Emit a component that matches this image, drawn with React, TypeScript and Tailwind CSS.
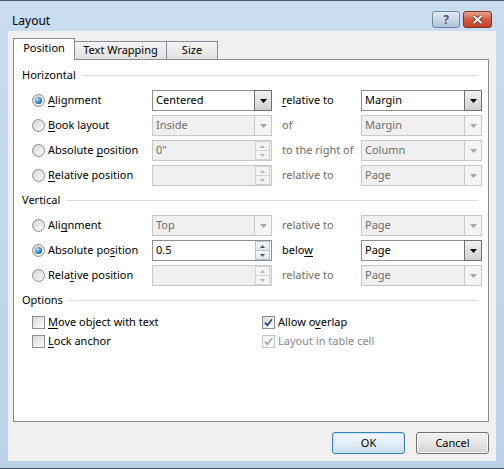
import React from 'react';

const font = "font-['Noto_Sans',sans-serif]";

function Mn({ text, at }: { text: string; at: number }) {
  // underline one letter, like a dialog mnemonic
  return (
    <>
      {text.slice(0, at)}
      <span className="underline underline-offset-[2px]">{text[at]}</span>
      {text.slice(at + 1)}
    </>
  );
}

function Radio({ checked }: { checked?: boolean }) {
  return (
    <span className="flex h-[13px] w-[13px] shrink-0 items-center justify-center rounded-full border border-[#8d8d8d] bg-linear-to-br from-[#d4d4d4] to-[#fcfcfc]">
      {checked && (
        <span className="h-[7px] w-[7px] rounded-full bg-[radial-gradient(circle_at_35%_35%,#b5e2ff,#2a7fd0_55%,#0d3f7c)]" />
      )}
    </span>
  );
}

function Check({ checked, disabled }: { checked?: boolean; disabled?: boolean }) {
  return (
    <span
      className={`flex h-[13px] w-[13px] shrink-0 items-center justify-center border bg-linear-to-br ${
        disabled ? 'border-[#c5c5c5] from-[#f0f0f0] to-[#fafafa]' : 'border-[#8e8f8f] from-[#d8d8d8] to-white'
      }`}
    >
      {checked && (
        <svg width="9" height="9" viewBox="0 0 9 9">
          <path
            d="M1 4.6 L3.4 7.2 L8 1.2"
            fill="none"
            stroke={disabled ? '#a8a8a8' : '#21438c'}
            strokeWidth="1.7"
          />
        </svg>
      )}
    </span>
  );
}

function Arrow({ color }: { color: string }) {
  return (
    <svg width="7" height="4" viewBox="0 0 7 4">
      <path d="M0 0h7L3.5 4z" fill={color} />
    </svg>
  );
}

function Combo({ value, enabled, w = 'w-[120px]' }: { value: string; enabled?: boolean; w?: string }) {
  return (
    <div
      className={`flex h-[21px] ${w} shrink-0 items-center border ${
        enabled ? 'border-[#8f8f8f] bg-white text-black' : 'border-[#c8c8c8] bg-[#f0f0f0] text-[#6d6d6d]'
      }`}
    >
      <span className="flex-1 pl-[3px]">{value}</span>
      <div
        className={`-my-px -mr-px flex h-[21px] w-[18px] items-center justify-center border ${
          enabled
            ? 'border-[#6f6f6f] bg-linear-to-b from-[#f2f2f2] to-[#cfcfcf]'
            : 'border-[#c8c8c8] bg-[#f4f4f4]'
        }`}
      >
        <Arrow color={enabled ? '#000' : '#a6a6a6'} />
      </div>
    </div>
  );
}

function Spin({ value, enabled }: { value: string; enabled?: boolean }) {
  const half = `flex flex-1 items-center justify-center border ${
    enabled ? 'border-[#b8c4d2] bg-linear-to-b from-[#f6f6f6] to-[#e2e6ea]' : 'border-[#d2d2d2] bg-[#f4f4f4]'
  }`;
  const c = enabled ? '#3f5a7a' : '#b4b4b4';
  return (
    <div
      className={`flex h-[21px] w-[120px] shrink-0 items-center border ${
        enabled ? 'border-[#8f8f8f] bg-white text-black' : 'border-[#c8c8c8] bg-[#f0f0f0] text-[#6d6d6d]'
      }`}
    >
      <span className="flex-1 pl-[3px]">{value}</span>
      <div className="mr-px flex h-[19px] w-[15px] flex-col">
        <div className={half}>
          <svg width="5" height="3" viewBox="0 0 5 3">
            <path d="M0 3h5L2.5 0z" fill={c} />
          </svg>
        </div>
        <div className={`-mt-px ${half}`}>
          <svg width="5" height="3" viewBox="0 0 5 3">
            <path d="M0 0h5L2.5 3z" fill={c} />
          </svg>
        </div>
      </div>
    </div>
  );
}

function Group({ title }: { title: string }) {
  return (
    <div className="flex h-[25px] items-center gap-[6px] pl-[8px] pr-[10px]">
      <span>{title}</span>
      <div className="h-px flex-1 bg-[#dcdcdc]" />
    </div>
  );
}

function Row({
  checked,
  label,
  field,
  rel,
  relOn,
  combo,
  comboOn,
}: {
  checked?: boolean;
  label: React.ReactNode;
  field: React.ReactNode;
  rel: React.ReactNode;
  relOn?: boolean;
  combo: string;
  comboOn?: boolean;
}) {
  return (
    <div className="flex h-[25px] items-center">
      <div className="flex w-[138px] items-center gap-[3px] pl-[18px]">
        <Radio checked={checked} />
        <span>{label}</span>
      </div>
      {field}
      <div className={`w-[89px] pl-[10px] ${relOn ? 'text-black' : 'text-[#6d6d6d]'}`}>{rel}</div>
      <Combo value={combo} enabled={comboOn} w="w-[121px]" />
    </div>
  );
}

export default function App() {
  return (
    <div
      className={`${font} flex h-[469px] w-[504px] flex-col border-y border-[#4a5563] bg-linear-to-b from-[#c9dcf0] to-[#bcd2ea] text-[11px] text-black`}
    >
      {/* title bar */}
      <div className="flex h-[30px] justify-between pl-[12px] pr-[12px]">
        <span className="pt-[14px] text-[12px] leading-none">Layout</span>
        <div className="flex items-center gap-[3px] self-start pt-[10px]">
          <div className="flex h-[17px] w-[28px] items-center justify-center rounded-[3px] border border-[#6f86a3] bg-linear-to-b from-[#e4ecf5] to-[#aec2da] text-[12px] font-bold text-[#4a5a6e]">
            ?
          </div>
          <div className="flex h-[17px] w-[29px] items-center justify-center rounded-[3px] border border-[#7c3426] bg-linear-to-b from-[#e9a593] via-[#d35a40] to-[#c2432a]">
            <svg width="11" height="9" viewBox="0 0 11 9">
              <path d="M1.5 1 L9.5 8 M9.5 1 L1.5 8" stroke="#5e2318" strokeWidth="3.4" />
              <path d="M1.5 1 L9.5 8 M9.5 1 L1.5 8" stroke="#fff" strokeWidth="2" />
            </svg>
          </div>
        </div>
      </div>

      {/* client area */}
      <div className="mx-[8px] flex h-[430px] flex-col bg-[#f0f0f0] pl-[5px] pt-[7px]">
        {/* tabs */}
        <div className="relative z-10 -mb-px flex items-end">
          <div className="flex h-[22px] w-[62px] items-center justify-center border border-b-0 border-[#898c95] bg-white pb-[2px]">
            Position
          </div>
          <div className="-ml-px flex h-[19px] w-[93px] items-center justify-center border border-[#898c95] bg-linear-to-b from-[#f4f4f4] to-[#e1e1e1]">
            Text Wrapping
          </div>
          <div className="-ml-px flex h-[19px] w-[52px] items-center justify-center border border-[#898c95] bg-linear-to-b from-[#f4f4f4] to-[#e1e1e1]">
            Size
          </div>
        </div>

        {/* panel */}
        <div className="flex h-[363px] w-[476px] flex-col border border-[#898c95] bg-white pt-[3px]">
          <Group title="Horizontal" />
          <Row
            checked
            label={<Mn text="Alignment" at={0} />}
            field={<Combo value="Centered" enabled />}
            rel={<Mn text="relative to" at={0} />}
            relOn
            combo="Margin"
            comboOn
          />
          <Row label={<Mn text="Book layout" at={0} />} field={<Combo value="Inside" />} rel="of" combo="Margin" />
          <Row
            label={<Mn text="Absolute position" at={9} />}
            field={<Spin value={'0"'} />}
            rel="to the right of"
            combo="Column"
          />
          <Row
            label={<Mn text="Relative position" at={0} />}
            field={<Spin value="" />}
            rel="relative to"
            combo="Page"
          />

          <Group title="Vertical" />
          <Row label={<Mn text="Alignment" at={3} />} field={<Combo value="Top" />} rel="relative to" combo="Page" />
          <Row
            checked
            label={<Mn text="Absolute position" at={11} />}
            field={<Spin value="0.5" enabled />}
            rel={<Mn text="below" at={4} />}
            relOn
            combo="Page"
            comboOn
          />
          <Row
            label={<Mn text="Relative position" at={4} />}
            field={<Spin value="" />}
            rel="relative to"
            combo="Page"
          />

          <Group title="Options" />
          <div className="flex">
            <div className="flex w-[248px] flex-col pl-[18px]">
              <div className="flex h-[19px] items-center gap-[3px]">
                <Check />
                <span>
                  <Mn text="Move object with text" at={0} />
                </span>
              </div>
              <div className="flex h-[19px] items-center gap-[3px]">
                <Check />
                <span>
                  <Mn text="Lock anchor" at={0} />
                </span>
              </div>
            </div>
            <div className="flex flex-col">
              <div className="flex h-[19px] items-center gap-[3px]">
                <Check checked />
                <span>
                  <Mn text="Allow overlap" at={7} />
                </span>
              </div>
              <div className="flex h-[19px] items-center gap-[3px] text-[#8a8a8a]">
                <Check checked disabled />
                <span>Layout in table cell</span>
              </div>
            </div>
          </div>
        </div>

        {/* buttons */}
        <div className="mt-[10px] flex w-[476px] justify-end gap-[11px]">
          <button className="flex h-[22px] w-[73px] items-center justify-center rounded-[3px] border border-[#3c7fb1] bg-linear-to-b from-[#f2f8fc] via-[#e3eff8] to-[#c9dff0] shadow-[inset_0_0_0_1px_#c5e4f8]">
            OK
          </button>
          <button className="flex h-[22px] w-[73px] items-center justify-center rounded-[3px] border border-[#707070] bg-linear-to-b from-[#f2f2f2] via-[#e6e6e6] to-[#d2d2d2] shadow-[inset_0_0_0_1px_#fbfbfb]">
            Cancel
          </button>
        </div>
      </div>
    </div>
  );
}
